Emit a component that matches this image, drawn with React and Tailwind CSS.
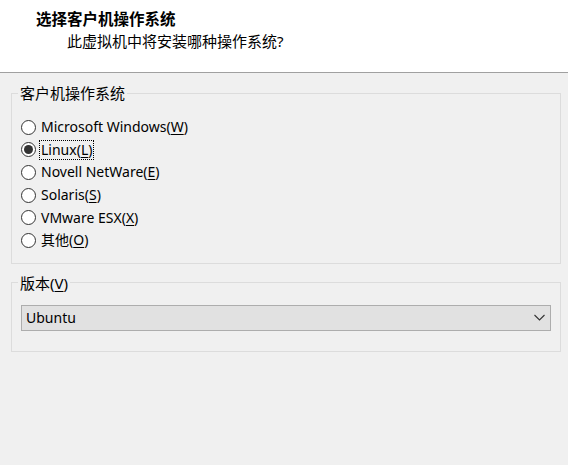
const FONT = "font-['Noto_Sans','Noto_Sans_CJK_SC',sans-serif]";

const systems = [
  { label: "Microsoft Windows", key: "W" },
  { label: "Linux", key: "L", checked: true },
  { label: "Novell NetWare", key: "E" },
  { label: "Solaris", key: "S" },
  { label: "VMware ESX", key: "X" },
  { label: "其他", key: "O" },
];

function Radio({ checked }) {
  return (
    <span className="flex h-[15px] w-[15px] shrink-0 items-center justify-center rounded-full border border-[#333333] bg-white">
      {checked && <span className="h-[9px] w-[9px] rounded-full bg-[#333333]" />}
    </span>
  );
}

export default function App() {
  return (
    <div className={`h-[465px] w-[568px] overflow-hidden bg-[#f0f0f0] text-black ${FONT}`}>
      <div className="h-[72px] bg-white">
        <div className="pl-[36px] pt-[8px] text-[15.5px] font-bold leading-[22px]">选择客户机操作系统</div>
        <div className="pl-[67px] text-[15px] leading-[22px]">此虚拟机中将安装哪种操作系统?</div>
      </div>
      <div className="h-px bg-[#a0a0a0]" />

      <div className="pl-[11px] pr-[7px] pt-[10px]">
        <fieldset className="border border-[#dcdcdc] pb-[11px] pl-[9px]">
          <legend className="ml-[-3px] px-[2px] text-[15px] leading-[20px]">客户机操作系统</legend>
          <div className="pt-[13px]">
            {systems.map((s) => (
              <div key={s.key} className="flex h-[22.6px] items-center gap-[4px]">
                <Radio checked={s.checked} />
                <span
                  className={`px-px text-[14px] leading-[18px] ${
                    s.checked ? "outline-1 outline-dotted outline-black" : ""
                  }`}
                >
                  {s.label}(<u className="underline-offset-2">{s.key}</u>)
                </span>
              </div>
            ))}
          </div>
        </fieldset>

        <fieldset className="mt-[9px] border border-[#dcdcdc] px-[9px] pb-[20px]">
          <legend className="ml-[-3px] px-[2px] text-[15px] leading-[20px]">
            版本(<u className="underline-offset-2">V</u>)
          </legend>
          <div className="mt-[12px] flex h-[26px] items-center justify-between border border-[#adadad] bg-[#e1e1e1] pl-[4px] pr-[5px]">
            <span className="text-[14px] leading-[18px]">Ubuntu</span>
            <svg width="11" height="7" viewBox="0 0 11 7" fill="none">
              <path d="M0.5 1 L5.5 6 L10.5 1" stroke="#333333" strokeWidth="1.1" />
            </svg>
          </div>
        </fieldset>
      </div>
    </div>
  );
}
